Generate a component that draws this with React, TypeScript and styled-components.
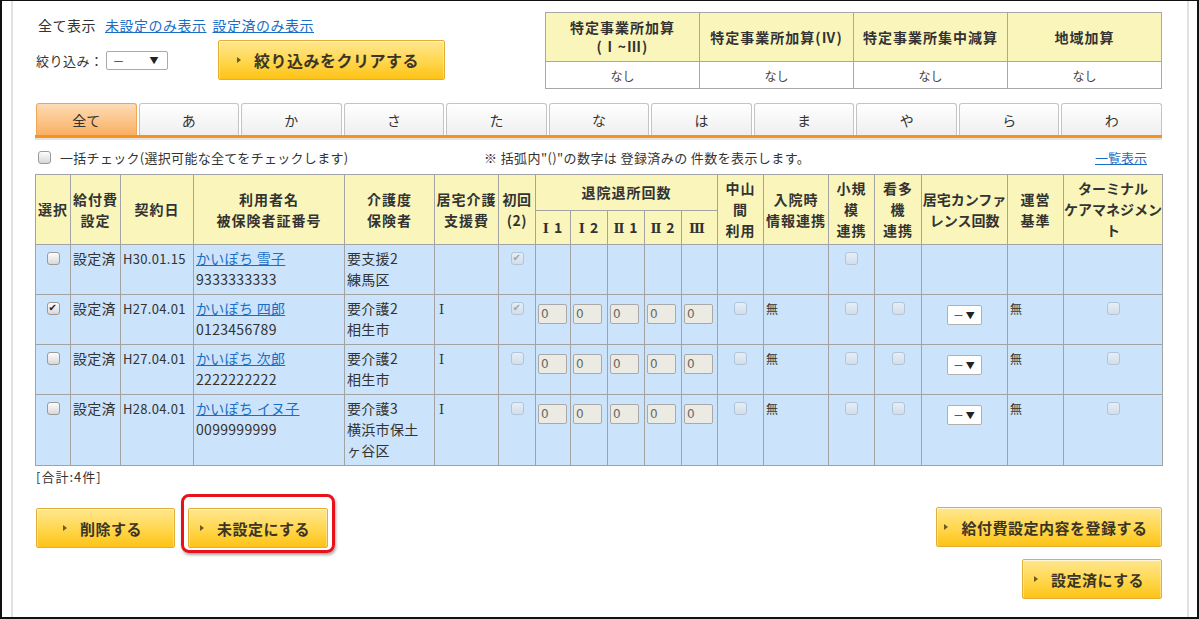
import styled, { createGlobalStyle } from "styled-components";

const GlobalStyle = createGlobalStyle`
  html, body { margin: 0; padding: 0; background: #fff; }
  body {
    font-family: "Noto Sans CJK JP", "DejaVu Sans", sans-serif;
    font-size: 13px;
    color: #333;
  }
`;

const Frame = styled.div`
  width: 1199px;
  height: 619px;
  box-sizing: border-box;
  border: 2px solid #111;
  border-top-width: 1px;
  display: flex;
  overflow: hidden;
  background: #fff;
`;

const Page = styled.div`
  margin-left: 9px;
  width: 1178px;
  box-sizing: border-box;
  border-left: 2px solid #e2e2e2;
  border-right: 2px solid #e2e2e2;
  padding: 11px 25px 0 22px;
`;

const Top = styled.div`
  display: flex;
  justify-content: space-between;
  align-items: flex-start;
`;

const Filter = styled.div`
  display: flex;
  flex-direction: column;
`;

const FilterLinks = styled.div`
  padding: 2px 0 0 3px;
  font-size: 14px;
  line-height: 22px;
  letter-spacing: 0.5px;
  white-space: nowrap;
`;

const TextLink = styled.a<{ $gap?: number }>`
  margin-left: ${(p) => p.$gap ?? 0}px;
  color: #1b6ec5;
  text-decoration: underline;
  cursor: pointer;
`;

const FilterRow = styled.div`
  display: flex;
  align-items: center;
  margin-top: 4px;
  padding-left: 1px;
  height: 40px;
`;

const FieldLabel = styled.span`
  font-size: 13px;
  letter-spacing: 0.5px;
`;

const FilterSelect = styled.span`
  display: flex;
  align-items: center;
  justify-content: space-between;
  width: 62px;
  height: 19px;
  box-sizing: border-box;
  margin: 1px 0 0 2px;
  padding: 0 8px 0 6px;
  border: 1px solid #aaa;
  border-radius: 2px;
  background: #fff;
  font-size: 12px;
`;

const Caret = styled.span`
  font-size: 9px;
  color: #222;
`;

const YellowButton = styled.button<{ $w: number; $fs?: number; $ml?: number }>`
  width: ${(p) => p.$w}px;
  height: 40px;
  margin-left: ${(p) => p.$ml ?? 0}px;
  display: flex;
  align-items: center;
  justify-content: center;
  gap: 13px;
  padding: 0 6px 0 0;
  box-sizing: border-box;
  border: 1px solid #e3ae35;
  border-radius: 2px;
  background: linear-gradient(#ffe790, #ffd64c 55%, #fdc316);
  box-shadow: inset 0 1px 0 rgba(255, 255, 255, 0.6),
    inset 1px 0 0 rgba(255, 255, 255, 0.35),
    inset -1px 0 0 rgba(255, 255, 255, 0.35);
  font-family: inherit;
  font-size: ${(p) => p.$fs ?? 15}px;
  font-weight: bold;
  color: #3a3526;
  letter-spacing: 0.5px;
  cursor: pointer;
`;

const Arrow = styled.span`
  width: 0;
  height: 0;
  border-left: 4px solid #6b5a23;
  border-top: 3.5px solid transparent;
  border-bottom: 3.5px solid transparent;
`;

const SummaryTable = styled.table`
  width: 617px;
  border-collapse: collapse;
  table-layout: fixed;
`;

const SumHead = styled.th`
  height: 48px;
  padding: 0;
  background: #faf6bb;
  border: 1px solid #a8a8a8;
  font-size: 14px;
  font-weight: bold;
  line-height: 19px;
  letter-spacing: 1px;
  text-align: center;
  vertical-align: middle;
  color: #333;
`;

const SumCell = styled.td`
  height: 26px;
  padding: 0;
  border: 1px solid #a8a8a8;
  text-align: center;
  font-size: 12px;
  color: #444;
  background: #fff;
`;

const TabStrip = styled.div`
  margin-top: 14px;
  padding-left: 1px;
  display: grid;
  grid-template-columns: repeat(11, 1fr);
  column-gap: 2px;
  border-bottom: 3px solid #f7921e;
`;

const Tab = styled.div<{ $active?: boolean }>`
  height: 32px;
  box-sizing: border-box;
  display: flex;
  align-items: center;
  justify-content: center;
  font-size: 14px;
  color: #333;
  border: 1px solid ${(p) => (p.$active ? "#f2a557" : "#c4c4c4")};
  border-bottom: none;
  border-radius: 3px 3px 0 0;
  background: ${(p) =>
    p.$active ? "linear-gradient(#fddcb6, #fab062)" : "linear-gradient(#fff, #efefef)"};
`;

const TabRule = styled.div`
  height: 2px;
  background: #e3e3e3;
`;

const NoteRow = styled.div`
  margin-top: 7px;
  height: 20px;
  display: flex;
  align-items: center;
  padding-left: 3px;
  font-size: 13px;
  white-space: nowrap;
`;

const BulkLabel = styled.label`
  display: flex;
  align-items: center;
  gap: 9px;
  width: 446px;
  letter-spacing: 0.3px;
`;

const Note = styled.span`
  letter-spacing: 0.4px;
`;

const ListLink = styled(TextLink)`
  margin-left: auto;
  margin-right: 15px;
  font-size: 13px;
`;

const Check = styled.span<{ $checked?: boolean; $disabled?: boolean; $top?: number }>`
  display: inline-block;
  position: relative;
  width: 13px;
  height: 13px;
  box-sizing: border-box;
  margin-top: ${(p) => p.$top ?? 0}px;
  vertical-align: top;
  border: 1px solid ${(p) => (p.$disabled ? "#b3c4d6" : "#9a9a9a")};
  border-radius: 3px;
  background: ${(p) =>
    p.$disabled ? "linear-gradient(#e6eef7, #d2deea)" : "linear-gradient(#fdfdfd, #d8d8d8)"};
  &::after {
    content: "${(p) => (p.$checked ? "✔" : "")}";
    position: absolute;
    left: 1px;
    top: -3px;
    font-family: "DejaVu Sans", sans-serif;
    font-size: 10px;
    line-height: 16px;
    color: ${(p) => (p.$disabled ? "#9aa6b2" : "#222")};
  }
`;

const Grid = styled.table`
  margin-top: 7px;
  width: 1127px;
  border-collapse: collapse;
  table-layout: fixed;
`;

const HeadRow = styled.tr<{ $h: number }>`
  height: ${(p) => p.$h}px;
`;

const Th = styled.th<{ $ls?: number }>`
  background: #faf6bb;
  border: 1px solid #a3a3a3;
  padding: 0;
  font-size: 14px;
  font-weight: bold;
  line-height: 21px;
  letter-spacing: ${(p) => p.$ls ?? 1}px;
  color: #333;
  text-align: center;
  vertical-align: middle;
  white-space: nowrap;
`;

const Numeral = styled.span`
  font-family: "DejaVu Serif", "Liberation Serif", serif;
  font-size: 13px;
  margin-right: 4px;
`;

const Td = styled.td<{ $center?: boolean; $pad?: string; $fs?: number }>`
  background: #cbe3fb;
  border: 1px solid #a3a3a3;
  padding: ${(p) => p.$pad ?? "3px 2px 4px 2px"};
  vertical-align: top;
  text-align: ${(p) => (p.$center ? "center" : "left")};
  font-size: ${(p) => p.$fs ?? 14}px;
  line-height: 21px;
  letter-spacing: 0.3px;
  color: #333;
  white-space: nowrap;
  overflow: hidden;
`;

const Roman = styled.span`
  font-family: "DejaVu Serif", "Liberation Serif", serif;
  font-size: 13px;
  padding-left: 2px;
`;

const Small = styled.span`
  font-size: 12px;
`;

const NumBox = styled.input`
  display: block;
  width: 29px;
  height: 20px;
  box-sizing: border-box;
  margin: 6px 0 0 0;
  padding: 0 2px;
  border: 1px solid #a9a9a9;
  border-radius: 2px;
  background: #ebeae3;
  color: #666;
  font-family: "DejaVu Sans", sans-serif;
  font-size: 12px;
`;

const MiniSelect = styled.span`
  display: inline-flex;
  align-items: center;
  justify-content: space-between;
  width: 35px;
  height: 20px;
  box-sizing: border-box;
  margin-top: 7px;
  padding: 0 6px 0 5px;
  vertical-align: top;
  background: #fff;
  border: 1px solid #b0b0b0;
  border-radius: 2px;
  font-size: 11px;
`;

const Total = styled.div`
  margin-top: 2px;
  padding-left: 1px;
  font-size: 13px;
  letter-spacing: 1px;
  line-height: 17px;
`;

const Actions = styled.div`
  margin-top: 22px;
  display: flex;
  justify-content: space-between;
  align-items: flex-start;
`;

const LeftActions = styled.div`
  display: flex;
  gap: 13px;
  margin-top: 1px;
  padding-left: 1px;
`;

const RightActions = styled.div`
  display: flex;
  flex-direction: column;
  align-items: flex-end;
  gap: 12px;
`;

const Highlight = styled.div`
  position: relative;
`;

const HighlightRing = styled.span`
  position: absolute;
  top: -14px;
  bottom: -5px;
  left: -7px;
  right: -7px;
  border: 3px solid #e8121a;
  border-radius: 8px;
  box-shadow: 1px 2px 3px rgba(0, 0, 0, 0.35);
  pointer-events: none;
`;

const tabs = ["全て", "あ", "か", "さ", "た", "な", "は", "ま", "や", "ら", "わ"];
const widths = [35, 50, 73, 151, 90, 64, 37, 35, 37, 37, 37, 36, 46, 65, 46, 47, 86, 56, 99];
const subHeads: [string, string][] = [
  ["Ⅰ", "1"],
  ["Ⅰ", "2"],
  ["Ⅱ", "1"],
  ["Ⅱ", "2"],
  ["Ⅲ", ""],
];

type Row = {
  checked: boolean;
  date: string;
  name: string;
  no: string;
  care: string[];
  first: boolean;
  full: boolean;
};

const rows: Row[] = [
  { checked: false, date: "H30.01.15", name: "かいぽち 雪子", no: "9333333333", care: ["要支援2", "練馬区"], first: true, full: false },
  { checked: true, date: "H27.04.01", name: "かいぽち 四郎", no: "0123456789", care: ["要介護2", "相生市"], first: true, full: true },
  { checked: false, date: "H27.04.01", name: "かいぽち 次郎", no: "2222222222", care: ["要介護2", "相生市"], first: false, full: true },
  { checked: false, date: "H28.04.01", name: "かいぽち イヌ子", no: "0099999999", care: ["要介護3", "横浜市保土", "ヶ谷区"], first: false, full: true },
];

const Dropdown = () => (
  <MiniSelect>
    <span>－</span>
    <Caret>▼</Caret>
  </MiniSelect>
);

export default function App() {
  return (
    <>
      <GlobalStyle />
      <Frame>
        <Page>
          <Top>
            <Filter>
              <FilterLinks>
                <span>全て表示</span>
                <TextLink $gap={9}>未設定のみ表示</TextLink>
                <TextLink $gap={6}>設定済のみ表示</TextLink>
              </FilterLinks>
              <FilterRow>
                <FieldLabel>絞り込み：</FieldLabel>
                <FilterSelect>
                  <span>－</span>
                  <Caret>▼</Caret>
                </FilterSelect>
                <YellowButton $w={227} $fs={16} $ml={50}>
                  <Arrow />
                  絞り込みをクリアする
                </YellowButton>
              </FilterRow>
            </Filter>
            <SummaryTable>
              <tbody>
                <tr>
                  <SumHead>
                    特定事業所加算
                    <br />(Ⅰ~Ⅲ)
                  </SumHead>
                  <SumHead>特定事業所加算(Ⅳ)</SumHead>
                  <SumHead>特定事業所集中減算</SumHead>
                  <SumHead>地域加算</SumHead>
                </tr>
                <tr>
                  <SumCell>なし</SumCell>
                  <SumCell>なし</SumCell>
                  <SumCell>なし</SumCell>
                  <SumCell>なし</SumCell>
                </tr>
              </tbody>
            </SummaryTable>
          </Top>

          <TabStrip>
            {tabs.map((t, i) => (
              <Tab key={t} $active={i === 0}>
                {t}
              </Tab>
            ))}
          </TabStrip>
          <TabRule />

          <NoteRow>
            <BulkLabel>
              <Check />
              一括チェック(選択可能な全てをチェックします)
            </BulkLabel>
            <Note>※ 括弧内"()"の数字は 登録済みの 件数を表示します。</Note>
            <ListLink>一覧表示</ListLink>
          </NoteRow>

          <Grid>
            <colgroup>
              {widths.map((w, i) => (
                <col key={i} style={{ width: w }} />
              ))}
            </colgroup>
            <thead>
              <HeadRow $h={36}>
                <Th rowSpan={2}>選択</Th>
                <Th rowSpan={2}>給付費<br />設定</Th>
                <Th rowSpan={2}>契約日</Th>
                <Th rowSpan={2}>利用者名<br />被保険者証番号</Th>
                <Th rowSpan={2}>介護度<br />保険者</Th>
                <Th rowSpan={2}>居宅介護<br />支援費</Th>
                <Th rowSpan={2} $ls={0.5}>初回<br />(2)</Th>
                <Th colSpan={5}>退院退所回数</Th>
                <Th rowSpan={2}>中山<br />間<br />利用</Th>
                <Th rowSpan={2}>入院時<br />情報連携</Th>
                <Th rowSpan={2}>小規<br />模<br />連携</Th>
                <Th rowSpan={2}>看多<br />機<br />連携</Th>
                <Th rowSpan={2} $ls={0}>居宅カンファ<br />レンス回数</Th>
                <Th rowSpan={2}>運営<br />基準</Th>
                <Th rowSpan={2} $ls={0}>ターミナル<br />ケアマネジメン<br />ト</Th>
              </HeadRow>
              <HeadRow $h={34}>
                {subHeads.map(([n, d]) => (
                  <Th key={n + d}>
                    <Numeral>{n}</Numeral>
                    {d}
                  </Th>
                ))}
              </HeadRow>
            </thead>
            <tbody>
              {rows.map((r, i) => (
                <tr key={i}>
                  <Td $center>
                    <Check $checked={r.checked} $top={4} />
                  </Td>
                  <Td>設定済</Td>
                  <Td $fs={13}>{r.date}</Td>
                  <Td>
                    <TextLink>{r.name}</TextLink>
                    <br />
                    {r.no}
                  </Td>
                  <Td>
                    {r.care.map((c) => (
                      <div key={c}>{c}</div>
                    ))}
                  </Td>
                  <Td>{r.full && <Roman>Ⅰ</Roman>}</Td>
                  <Td $center>
                    <Check $checked={r.first} $disabled $top={4} />
                  </Td>
                  {[0, 1, 2, 3, 4].map((k) => (
                    <Td key={k} $pad="3px 0 0 2px">
                      {r.full && <NumBox readOnly value="0" />}
                    </Td>
                  ))}
                  <Td $center>{r.full && <Check $disabled $top={4} />}</Td>
                  <Td>{r.full && <Small>無</Small>}</Td>
                  <Td $center>
                    <Check $disabled $top={4} />
                  </Td>
                  <Td $center>{r.full && <Check $disabled $top={4} />}</Td>
                  <Td $center>{r.full && <Dropdown />}</Td>
                  <Td>{r.full && <Small>無</Small>}</Td>
                  <Td $center>{r.full && <Check $disabled $top={4} />}</Td>
                </tr>
              ))}
            </tbody>
          </Grid>

          <Total>[合計:4件]</Total>

          <Actions>
            <LeftActions>
              <YellowButton $w={139}>
                <Arrow />
                削除する
              </YellowButton>
              <Highlight>
                <YellowButton $w={140}>
                  <Arrow />
                  未設定にする
                </YellowButton>
                <HighlightRing />
              </Highlight>
            </LeftActions>
            <RightActions>
              <YellowButton $w={226}>
                <Arrow />
                給付費設定内容を登録する
              </YellowButton>
              <YellowButton $w={140}>
                <Arrow />
                設定済にする
              </YellowButton>
            </RightActions>
          </Actions>
        </Page>
      </Frame>
    </>
  );
}
